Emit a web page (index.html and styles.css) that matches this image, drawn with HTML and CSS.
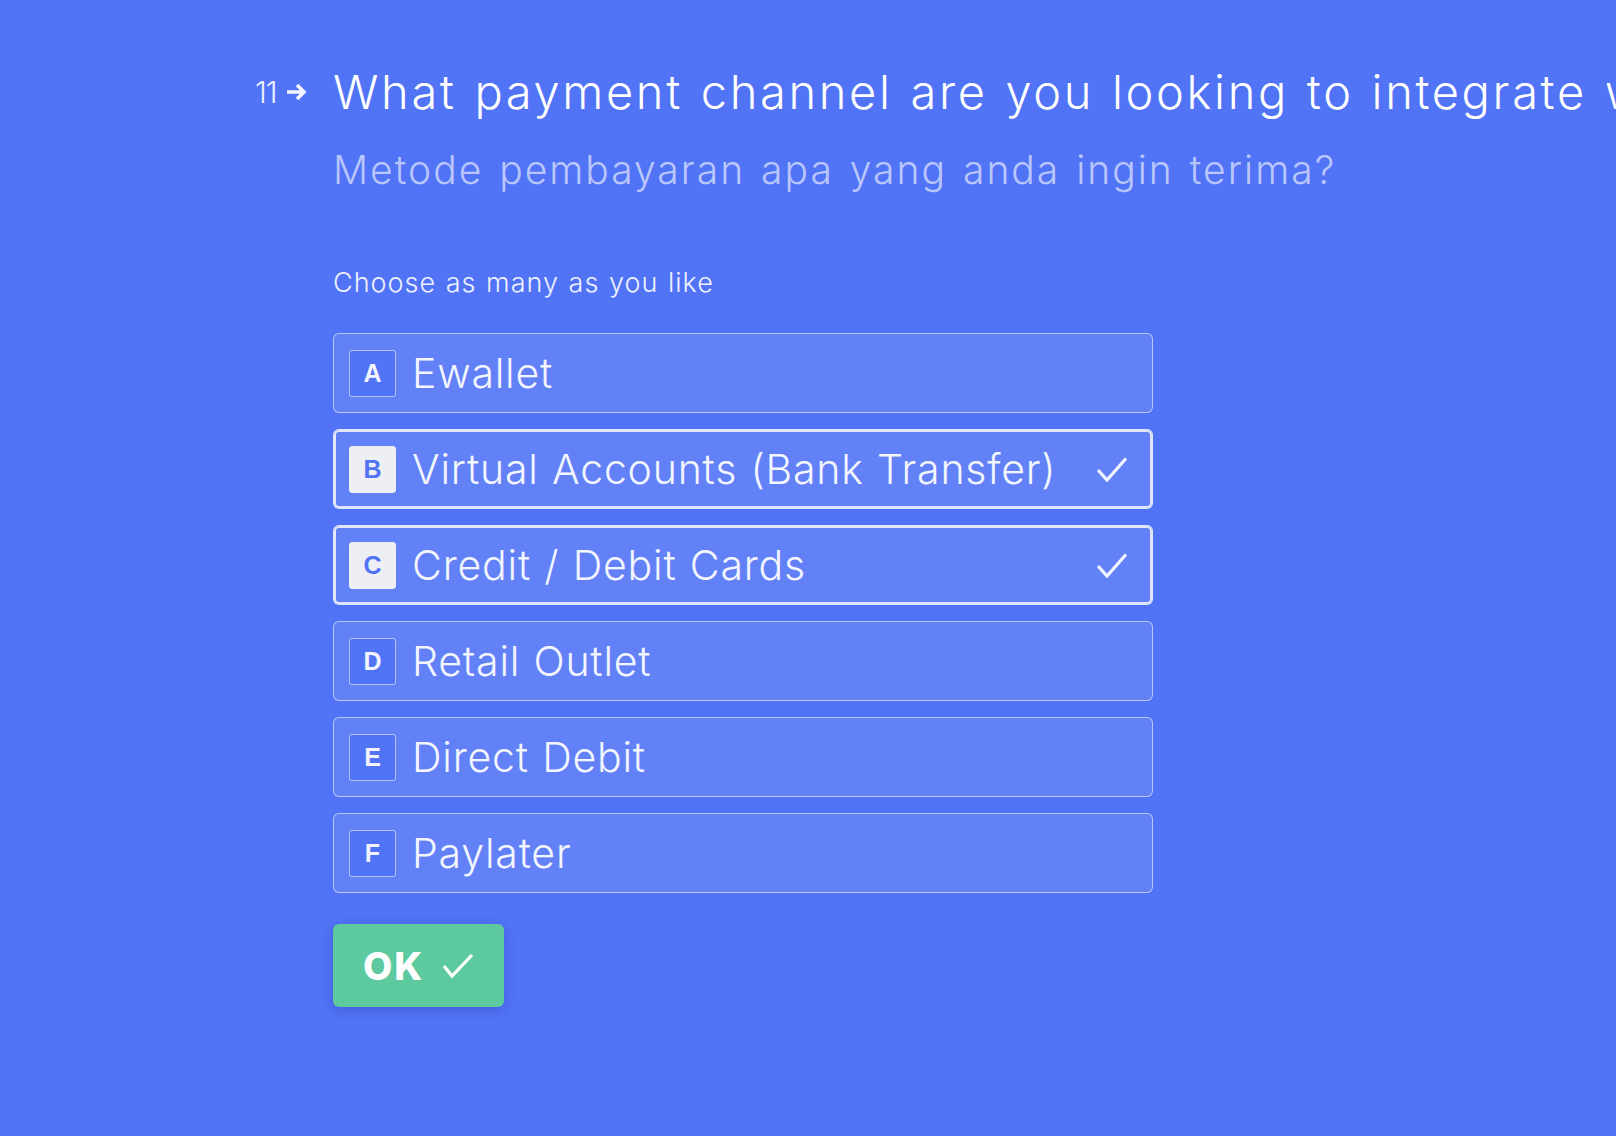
FILE: index.html
```html
<!DOCTYPE html>
<html lang="en">
<head>
<meta charset="utf-8">
<title>Payment channel</title>
<link rel="stylesheet" href="styles.css">
</head>
<body>
<main class="page">
  <section class="question">
    <div class="qnum">
      <span class="qnum-text">11</span>
      <svg class="qnum-arrow" width="22" height="20" viewBox="0 0 22 20" aria-hidden="true">
        <path d="M1 10 H18 M11 3 L18 10 L11 17" fill="none" stroke="#f2f4ff" stroke-width="3.6" stroke-linecap="butt" stroke-linejoin="miter"/>
      </svg>
    </div>
    <div class="qbody">
      <h1 class="title">What payment channel are you looking to integrate with?</h1>
      <p class="subtitle">Metode pembayaran apa yang anda ingin terima?</p>
      <p class="hint">Choose as many as you like</p>
      <ul class="options">
        <li class="option"><span class="key">A</span><span class="label">Ewallet</span></li>
        <li class="option selected"><span class="key">B</span><span class="label">Virtual Accounts (Bank Transfer)</span>
          <svg class="tick" width="32" height="26" viewBox="0 0 32 26" aria-hidden="true"><path d="M2 14 L11 24 L30 2.5" fill="none" stroke="#f2f4ff" stroke-width="3.2"/></svg>
        </li>
        <li class="option selected"><span class="key">C</span><span class="label">Credit / Debit Cards</span>
          <svg class="tick" width="32" height="26" viewBox="0 0 32 26" aria-hidden="true"><path d="M2 14 L11 24 L30 2.5" fill="none" stroke="#f2f4ff" stroke-width="3.2"/></svg>
        </li>
        <li class="option"><span class="key">D</span><span class="label">Retail Outlet</span></li>
        <li class="option"><span class="key">E</span><span class="label">Direct Debit</span></li>
        <li class="option"><span class="key">F</span><span class="label">Paylater</span></li>
      </ul>
      <button class="ok" type="button">OK
        <svg class="ok-tick" width="32" height="26" viewBox="0 0 32 26" aria-hidden="true"><path d="M2 13 L10 23 L30 2" fill="none" stroke="#ffffff" stroke-width="3.2"/></svg>
      </button>
    </div>
  </section>
</main>
</body>
</html>
```
FILE: styles.css
```css
html, body {
  margin: 0;
  padding: 0;
  overflow: hidden;
}
body {
  background: #5173f6;
  font-family: "Inter", "DejaVu Sans", sans-serif;
  color: #ffffff;
  width: 1616px;
  height: 1136px;
}
.page {
  padding: 64px 0 0 255px;
}
.question {
  display: flex;
  align-items: flex-start;
}
.qnum {
  width: 78px;
  flex: none;
  display: flex;
  align-items: center;
  gap: 9px;
  height: 56px;
}
.qnum-text {
  font-size: 30px;
  font-weight: 300;
  color: #eef1ff;
  letter-spacing: -1px;
}
.qnum-arrow {
  display: block;
}
.qbody {
  flex: none;
  width: 1400px;
}
.title {
  margin: 0;
  font-size: 47px;
  font-weight: 300;
  line-height: 56px;
  white-space: nowrap;
  letter-spacing: 2.65px;
  word-spacing: 2px;
  color: #ffffff;
}
.subtitle {
  margin: 25px 0 0;
  font-size: 39px;
  font-weight: 300;
  line-height: 50px;
  white-space: nowrap;
  color: rgba(255, 255, 255, 0.62);
  letter-spacing: 2px;
  word-spacing: 3px;
}
.hint {
  margin: 70px 0 0;
  font-size: 27px;
  font-weight: 300;
  line-height: 36px;
  color: #eef1ff;
  letter-spacing: 1px;
  word-spacing: 1px;
}
.options {
  list-style: none;
  margin: 32px 0 0;
  padding: 0;
  width: 820px;
  display: flex;
  flex-direction: column;
  gap: 16px;
}
.option {
  box-sizing: border-box;
  height: 80px;
  display: flex;
  align-items: center;
  padding: 0 24px 0 15px;
  border: 1px solid rgba(255, 255, 255, 0.55);
  border-radius: 6px;
  background: rgba(255, 255, 255, 0.1);
}
.option.selected {
  border-color: rgba(255, 255, 255, 0.8);
  box-shadow: inset 0 0 0 2px rgba(255, 255, 255, 0.8);
}
.key {
  box-sizing: border-box;
  width: 47px;
  height: 47px;
  flex: none;
  display: flex;
  align-items: center;
  justify-content: center;
  border: 1px solid rgba(255, 255, 255, 0.55);
  border-radius: 3px;
  background: #5173f6;
  font-family: "Liberation Sans", Arial, sans-serif;
  font-weight: 700;
  font-size: 25px;
  color: #f2f4ff;
}
.option.selected .key {
  background: #eeeff5;
  border-color: #eeeff5;
  color: #5173f6;
}
.label {
  margin-left: 16px;
  flex: 1;
  font-size: 41px;
  font-weight: 300;
  color: #f3f5ff;
  letter-spacing: 0.8px;
  word-spacing: 1px;
  white-space: nowrap;
}
.tick {
  flex: none;
  display: block;
}
.ok {
  margin-top: 31px;
  box-sizing: border-box;
  width: 171px;
  height: 83px;
  border: none;
  border-radius: 6px;
  background: #5cc99f;
  box-shadow: 0 3px 12px rgba(30, 50, 150, 0.3);
  display: flex;
  align-items: center;
  padding: 0 0 0 30px;
  gap: 18px;
  font-family: "Inter", "DejaVu Sans", sans-serif;
  font-weight: 800;
  font-size: 38px;
  letter-spacing: 2px;
  color: #ffffff;
  cursor: pointer;
}
.ok-tick {
  display: block;
}
```
